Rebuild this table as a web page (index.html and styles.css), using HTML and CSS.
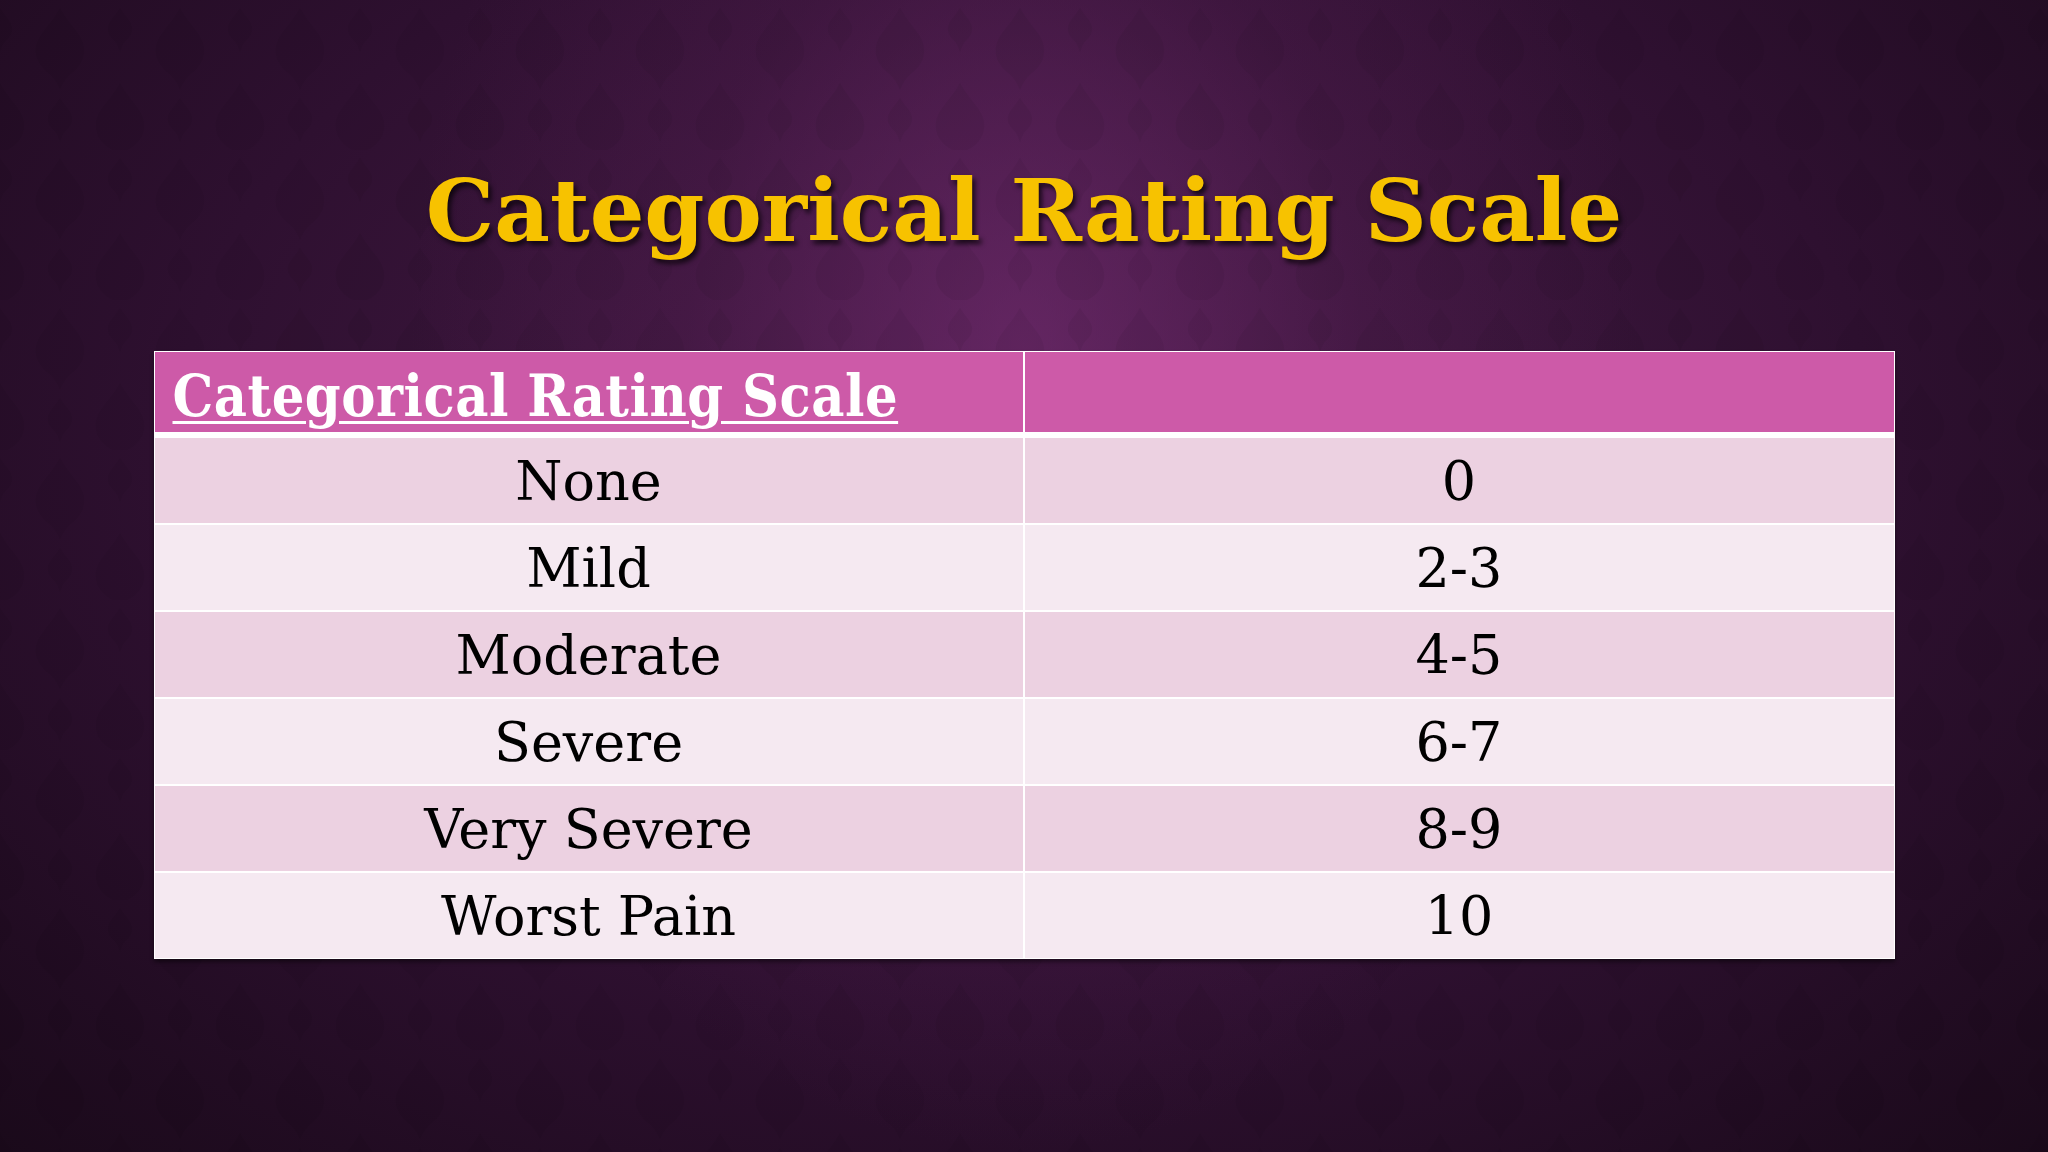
FILE: index.html
```html
<!DOCTYPE html>
<html lang="en">
<head>
<meta charset="utf-8">
<title>Categorical Rating Scale</title>
<link rel="stylesheet" href="styles.css">
</head>
<body>
<main class="slide">
  <h1 class="title">Categorical Rating Scale</h1>
  <div class="scale">
    <div class="cell head"><span class="head-text">Categorical Rating Scale</span></div>
    <div class="cell head"></div>
    <div class="cell odd">None</div><div class="cell odd">0</div>
    <div class="cell even">Mild</div><div class="cell even">2-3</div>
    <div class="cell odd">Moderate</div><div class="cell odd">4-5</div>
    <div class="cell even">Severe</div><div class="cell even">6-7</div>
    <div class="cell odd">Very Severe</div><div class="cell odd">8-9</div>
    <div class="cell even">Worst Pain</div><div class="cell even">10</div>
  </div>
</main>
</body>
</html>
```
FILE: styles.css
```css
html, body {
  margin: 0;
  padding: 0;
}
body {
  width: 2048px;
  height: 1152px;
  overflow: hidden;
  background:
    url("data:image/svg+xml,%3Csvg xmlns='http://www.w3.org/2000/svg' width='120' height='150' viewBox='0 0 160 200'%3E%3Cg fill='%23000' fill-opacity='0.05'%3E%3Cpath d='M80 10 C95 40 120 50 110 80 C100 100 90 95 80 120 C70 95 60 100 50 80 C40 50 65 40 80 10Z'/%3E%3Cpath d='M80 130 C88 145 100 150 95 165 C90 175 85 172 80 190 C75 172 70 175 65 165 C60 150 72 145 80 130Z'/%3E%3Cpath d='M0 110 C15 140 40 150 30 180 C20 200 10 195 0 210 C-10 195 -20 200 -30 180 C-40 150 -15 140 0 110Z'/%3E%3Cpath d='M160 110 C175 140 200 150 190 180 C180 200 170 195 160 210 C150 195 140 200 130 180 C120 150 145 140 160 110Z'/%3E%3Cpath d='M0 10 C8 25 20 30 15 45 C10 55 5 52 0 70 C-5 52 -10 55 -15 45 C-20 30 -8 25 0 10Z'/%3E%3Cpath d='M160 10 C168 25 180 30 175 45 C170 55 165 52 160 70 C155 52 150 55 145 45 C140 30 152 25 160 10Z'/%3E%3C/g%3E%3C/svg%3E"),
    radial-gradient(ellipse 30% 70% at 50% 30%, rgba(125, 48, 122, 0.55) 0%, rgba(92, 33, 90, 0.25) 55%, rgba(0, 0, 0, 0) 100%),
    radial-gradient(ellipse 75% 90% at 50% 38%, #481b48 0%, #2e1030 55%, #180918 100%);
  font-family: "DejaVu Serif", "Liberation Serif", serif;
}
.slide {
  height: 1152px;
  display: flex;
  flex-direction: column;
  align-items: center;
}
.title {
  margin: 161px 0 0 0;
  font-family: "DejaVu Serif", "Liberation Serif", serif;
  font-weight: bold;
  font-size: 86px;
  line-height: 100px;
  color: #f7c200;
  text-shadow: 3px 4px 5px rgba(0, 0, 0, 0.7);
  white-space: nowrap;
}
.scale {
  margin-top: 90px;
  width: 1739px;
  padding: 1px;
  background: #ffffff;
  display: grid;
  grid-template-columns: 868px 869px;
  grid-template-rows: 84px repeat(6, 85px);
  column-gap: 2px;
  row-gap: 2px;
  box-shadow: 0 3px 4px rgba(0, 0, 0, 0.45);
}
.cell {
  display: flex;
  align-items: center;
  justify-content: center;
  padding-top: 2px;
  font-family: "DejaVu Serif", "Liberation Serif", serif;
  font-size: 54px;
  color: #000000;
  white-space: nowrap;
}
.head {
  background: #cd5aa8;
  margin-bottom: 4px;
  justify-content: flex-start;
  padding: 6px 0 0 18px;
}
.head-text {
  font-stretch: condensed;
  font-weight: bold;
  font-size: 57px;
  letter-spacing: 0.5px;
  color: #ffffff;
  text-decoration: underline;
  text-decoration-thickness: 3px;
  text-underline-offset: 5px;
}
.odd {
  background: #ecd1e1;
}
.even {
  background: #f5e9f1;
}
```
